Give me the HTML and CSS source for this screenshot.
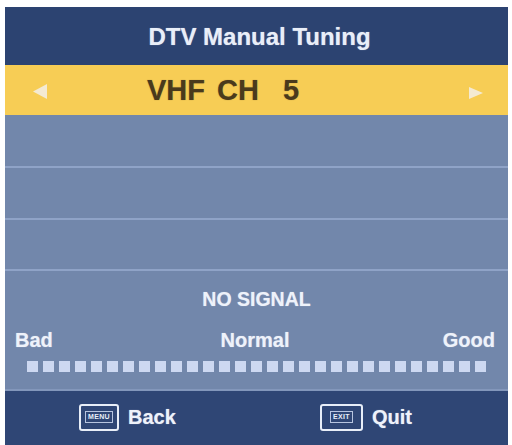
FILE: index.html
```html
<!DOCTYPE html>
<html>
<head>
<meta charset="utf-8">
<link rel="stylesheet" href="styles.css">
</head>
<body>
<div class="panel">
  <div class="header">DTV Manual Tuning</div>
  <div class="selector">
    <svg class="arrow arrow-left" width="16" height="16" viewBox="0 0 16 16"><polygon points="15,0 15,15 1,7.5" fill="#f4ead2"/></svg>
    <div class="channel"><span>VHF</span><span>CH</span><span>5</span></div>
    <svg class="arrow arrow-right" width="16" height="16" viewBox="0 0 16 16"><polygon points="1,2 1,14 15,8" fill="#f4ead2"/></svg>
  </div>
  <div class="rows">
    <div class="row"></div>
    <div class="row"></div>
    <div class="row"></div>
  </div>
  <div class="signal">
    <div class="status">NO SIGNAL</div>
    <div class="labels">
      <span class="bad">Bad</span>
      <span class="normal">Normal</span>
      <span class="good">Good</span>
    </div>
    <div class="meter">
      <i></i><i></i><i></i><i></i><i></i><i></i><i></i><i></i><i></i><i></i>
      <i></i><i></i><i></i><i></i><i></i><i></i><i></i><i></i><i></i><i></i>
      <i></i><i></i><i></i><i></i><i></i><i></i><i></i><i></i><i></i>
    </div>
  </div>
  <div class="footer">
    <div class="hint hint-back"><span class="key"><span class="key-inner">MENU</span></span><span class="hint-text">Back</span></div>
    <div class="hint hint-quit"><span class="key"><span class="key-inner">EXIT</span></span><span class="hint-text">Quit</span></div>
  </div>
</div>
</body>
</html>
```

FILE: styles.css
```css
* { box-sizing: border-box; }
html, body { margin: 0; padding: 0; background: #ffffff; }
body {
  width: 512px;
  height: 445px;
  overflow: hidden;
  font-family: "Liberation Sans", Arial, sans-serif;
  font-weight: bold;
}
.panel {
  margin: 7px 4px 0 5px;
  width: 503px;
  height: 438px;
  display: flex;
  flex-direction: column;
  background: #7287ab;
}
.header {
  height: 58px;
  padding-top: 16px;
  background: #2c4371;
  color: #e9eef8;
  font-size: 24px;
  line-height: 28px;
  text-align: center;
  padding-left: 6px;
  text-shadow: 0 0 1px rgba(233, 238, 248, 0.6);
}
.selector {
  height: 50px;
  background: #f7cd55;
  display: flex;
  align-items: center;
  justify-content: space-between;
  padding: 0 24px 0 27px;
}
.selector .arrow { display: block; }
.selector .arrow-left { margin-top: 3px; }
.selector .arrow-right { margin-top: 5px; }
.channel {
  display: flex;
  gap: 12px;
  color: #4a3a1c;
  font-size: 29px;
  line-height: 50px;
  margin-right: 70px;
  text-shadow: 0 0 1px rgba(74, 58, 28, 0.5);
}
.channel span:nth-child(2) { margin-right: 12px; }
.rows { display: flex; flex-direction: column; }
.row {
  height: 52px;
  border-bottom: 2px solid #8fa3c7;
}
.row:first-child { height: 53px; }
.row:nth-child(3) { height: 51px; }
.signal {
  height: 120px;
  padding-top: 18px;
  display: flex;
  flex-direction: column;
  border-bottom: 2px solid #8397bb;
}
.status {
  color: #eef2fa;
  font-size: 19.5px;
  line-height: 20px;
  text-align: center;
  padding-left: 0;
  text-shadow: 0 0 1px rgba(238, 242, 250, 0.6);
}
.labels {
  margin-top: 20px;
  display: grid;
  grid-template-columns: 1fr auto 1fr;
  padding: 0 13px 0 10px;
  color: #eef2fa;
  font-size: 20px;
  line-height: 22px;
  text-shadow: 0 0 1px rgba(238, 242, 250, 0.6);
}
.labels .bad { justify-self: start; }
.labels .normal { justify-self: center; }
.labels .good { justify-self: end; }
.meter {
  margin-top: 10px;
  padding-left: 22px;
  display: flex;
  gap: 5px;
}
.meter i {
  display: block;
  width: 11px;
  height: 11px;
  background: #cdd8f1;
}
.footer {
  flex: 1;
  background: #2f4675;
  display: flex;
  align-items: center;
  padding-left: 74px;
  padding-bottom: 2px;
}
.hint {
  display: flex;
  align-items: center;
  gap: 9px;
  color: #eef2fa;
  font-size: 20px;
  line-height: 24px;
  text-shadow: 0 0 1px rgba(238, 242, 250, 0.6);
}
.hint-back { width: 241px; }
.key {
  width: 40px;
  height: 27px;
  border: 2px solid #e8eef8;
  border-radius: 3px;
  display: flex;
  align-items: center;
  justify-content: center;
}
.hint-quit .key { width: 43px; }
.key-inner {
  border: 1px solid #b8c5e0;
  padding: 1px 2px;
  font-size: 7px;
  line-height: 8px;
  color: #e8eef8;
  letter-spacing: 0.3px;
  text-shadow: none;
}
```
